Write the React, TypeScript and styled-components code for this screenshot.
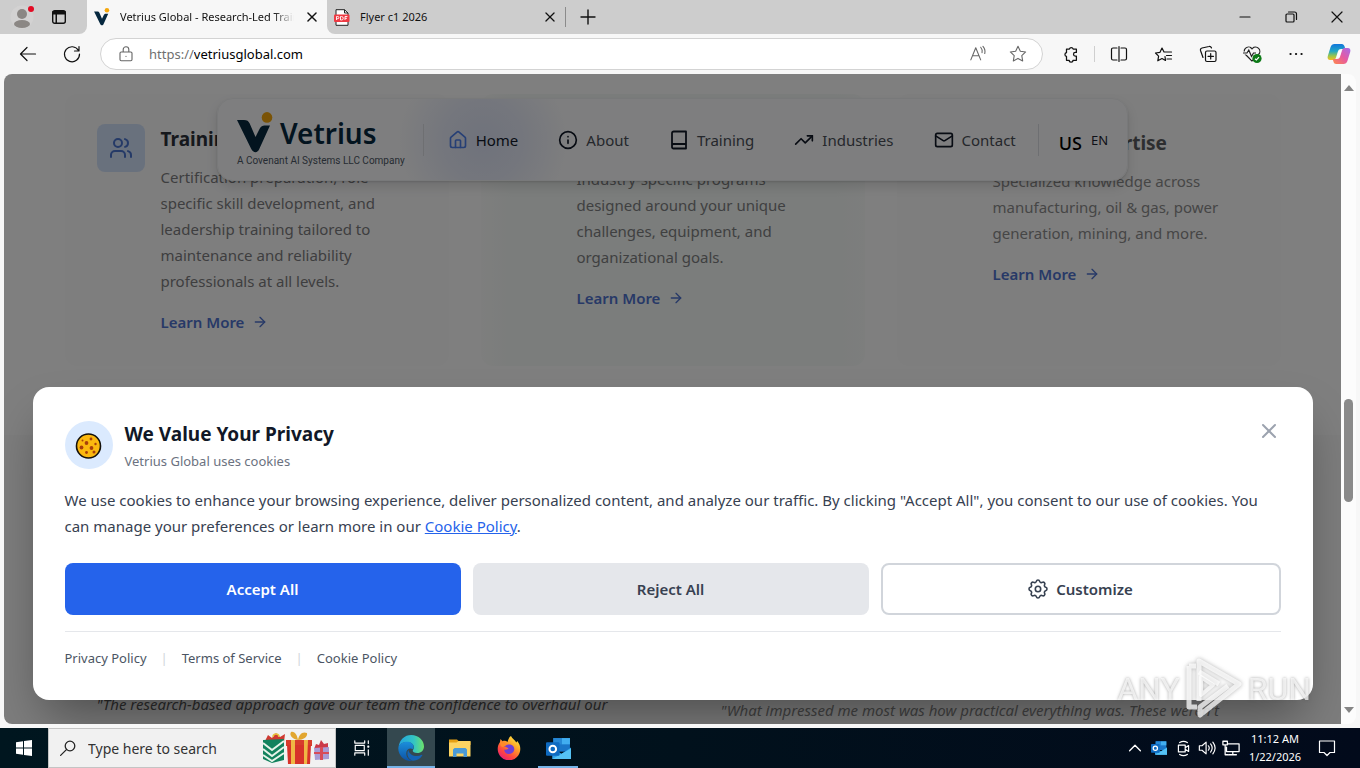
import React from "react";
import styled, { createGlobalStyle } from "styled-components";
import { ArrowRight, House, Info, Mail, TrendingUp, Users, X } from "lucide-react";

const sans = `"Noto Sans", "Open Sans", sans-serif`;

const GlobalStyle = createGlobalStyle`
  *, *::before, *::after { box-sizing: border-box; }
  body { margin: 0; font-family: ${sans}; font-size: 15px; color: #111; }
  button, input { font: inherit; color: inherit; }
  button { border: 0; padding: 0; background: none; cursor: pointer; }
  h2, h3, p { margin: 0; }
  svg { display: block; flex: none; }
`;

const Screen = styled.div`
  height: 100vh;
  display: flex;
  flex-direction: column;
  overflow: hidden;
  background: #f7f7f7;
`;

/* ---------- Browser chrome ---------- */

const TabStrip = styled.div`
  height: 34px;
  flex: none;
  display: flex;
  background: #f7f7f7;
`;

const StripStart = styled.div`
  width: 87px;
  display: flex;
  align-items: center;
  gap: 16px;
  padding-left: 9px;
  background: #cdcdcd;
  border-bottom-right-radius: 8px;
`;

const StripRest = styled.div`
  flex: 1;
  display: flex;
  align-items: center;
  background: #cdcdcd;
  border-bottom-left-radius: 8px;
`;

const Tab = styled.div<{ $active?: boolean }>`
  width: ${(p) => (p.$active ? 240 : 238)}px;
  height: 34px;
  display: flex;
  align-items: center;
  gap: 10px;
  padding: 0 7px;
  background: ${(p) => (p.$active ? "#f7f7f7" : "transparent")};
  border-radius: ${(p) => (p.$active ? "8px 8px 0 0" : 0)};
`;

const TabTitle = styled.span<{ $fade?: boolean }>`
  flex: 1;
  min-width: 0;
  overflow: hidden;
  white-space: nowrap;
  font-size: 11px;
  line-height: 16px;
  mask-image: ${(p) => (p.$fade ? "linear-gradient(to right, #000 88%, transparent)" : "none")};
`;

const IconButton = styled.button<{ $w?: number }>`
  width: ${(p) => p.$w ?? 16}px;
  height: 28px;
  flex: none;
  display: flex;
  align-items: center;
  justify-content: center;
`;

const StripLine = styled.span`
  width: 1px;
  height: 20px;
  background: #8b8b8b;
`;

const WindowButtons = styled.div`
  display: flex;
  margin-left: auto;
`;

const Toolbar = styled.div`
  height: 40px;
  flex: none;
  display: flex;
  align-items: center;
`;

const ToolStart = styled.div`
  width: 100px;
  display: flex;
  padding-left: 6px;
`;

const AddressBar = styled.label`
  flex: 1;
  height: 32px;
  display: flex;
  align-items: center;
  padding: 0 4px 0 17px;
  background: #fff;
  border: 1px solid #d3d3d3;
  border-radius: 16px;
  font-size: 13px;
  color: #666;
`;

const Scheme = styled.span`
  margin-left: 15px;
  color: #6f6f6f;
`;

const AddressInput = styled.input`
  flex: 1;
  min-width: 0;
  padding: 0;
  border: 0;
  outline: 0;
  background: none;
  color: #000;
`;

const ToolEnd = styled.div`
  display: flex;
  align-items: center;
  padding-left: 6px;
`;

const ToolLine = styled.span`
  width: 1px;
  height: 16px;
  margin: 0 1px;
  background: #cfcfcf;
`;

/* ---------- Web page ---------- */

const Frame = styled.div`
  flex: 1;
  min-height: 0;
  display: flex;
  padding: 0 4px 4px 4px;
`;

const Page = styled.main`
  position: relative;
  flex: 1;
  overflow: hidden;
  background: #fff;
  border-radius: 8px 0 0 8px;
`;

const Scrollbar = styled.div`
  width: 15px;
  display: flex;
  flex-direction: column;
  align-items: center;
  justify-content: space-between;
  background: #fcfcfc;
  border-radius: 0 8px 8px 0;
`;

const ScrollTrack = styled.div`
  flex: 1;
  display: flex;
  flex-direction: column;
  padding-top: 297px;
`;

const ScrollThumb = styled.span`
  width: 9px;
  height: 103px;
  border-radius: 5px;
  background: #8a8a8a;
`;

const Services = styled.section`
  padding: 20px 16px 69px;
`;

const Columns = styled.div<{ $count: number }>`
  max-width: 1216px;
  margin: 0 auto;
  display: grid;
  grid-template-columns: repeat(${(p) => p.$count}, minmax(0, 1fr));
  gap: 32px;
`;

const ServiceCard = styled.article<{ $tint: string; $rise: number }>`
  display: flex;
  align-items: flex-start;
  gap: 16px;
  padding: ${(p) => 30 + p.$rise}px 32px 32px;
  background: ${(p) => p.$tint};
  border-radius: 12px;
`;

const ServiceIcon = styled.span`
  width: 48px;
  height: 48px;
  flex: none;
  display: flex;
  align-items: center;
  justify-content: center;
  background: #d3e3fb;
  border-radius: 8px;
  color: #4a74cf;
`;

const ServiceTitle = styled.h3<{ $ink: string }>`
  margin-bottom: 10px;
  font-size: 19px;
  line-height: 30px;
  font-weight: 700;
  white-space: nowrap;
  color: ${(p) => p.$ink};
`;

const ServiceText = styled.p<{ $ink: string }>`
  line-height: 26px;
  white-space: pre-line;
  color: ${(p) => p.$ink};
`;

const LearnMore = styled.a`
  display: inline-flex;
  align-items: center;
  gap: 8px;
  margin-top: 16px;
  line-height: 24px;
  font-weight: 600;
  color: #4f73cf;
  text-decoration: none;
`;

const Testimonials = styled.section`
  padding: 256px 16px 64px;
  background: #fbfbfb;
`;

const Quote = styled.blockquote<{ $late?: boolean }>`
  margin: 0;
  padding: ${(p) => (p.$late ? 6 : 0)}px 32px 32px;
  line-height: 26px;
  font-style: italic;
  white-space: nowrap;
  color: ${(p) => (p.$late ? "#868686" : "#585858")};
`;

const NavHolder = styled.header`
  position: absolute;
  top: 24px;
  left: 0;
  right: 0;
  display: flex;
  justify-content: center;
`;

const NavBar = styled.nav`
  height: 83px;
  display: flex;
  align-items: center;
  padding: 0 19px;
  border: 1px solid #f1f2f4;
  border-radius: 16px;
  background: radial-gradient(circle at 265px 42px, #dfe5f8 0, #e9edfa 40px, #fdfdfe 86px);
  box-shadow: 0 6px 12px rgba(0, 0, 0, 0.12), 0 1px 2px rgba(0, 0, 0, 0.12);
`;

const Brand = styled.a`
  display: flex;
  flex-direction: column;
  color: #06283f;
  text-decoration: none;
`;

const BrandRow = styled.span`
  display: flex;
  align-items: center;
  gap: 6px;
  height: 42px;
  font-size: 28px;
  line-height: 42px;
  font-weight: 600;
`;

const BrandNote = styled.span`
  font-family: Roboto, sans-serif;
  font-size: 10px;
  line-height: 14px;
  color: #4d5866;
`;

const NavLine = styled.span<{ $before: number; $after: number }>`
  width: 1px;
  height: 32px;
  margin: 0 ${(p) => p.$after}px 0 ${(p) => p.$before}px;
  background: #dcdfe4;
`;

const NavLink = styled.a<{ $active?: boolean }>`
  display: flex;
  align-items: center;
  gap: 8px;
  padding: 12px 20px;
  color: ${(p) => (p.$active ? "#10182a" : "#4a4f58")};
  text-decoration: none;
  line-height: 24px;

  &:first-of-type { padding-left: 0; }
  svg { color: ${(p) => (p.$active ? "#4d7fea" : "#111827")}; }
`;

const NavLinks = styled.div`
  display: flex;
  margin-right: -20px;
`;

const Locale = styled.button`
  display: flex;
  align-items: center;
  gap: 9px;
  font-size: 13px;
  line-height: 24px;
  color: #1d2433;
`;

const LocaleRegion = styled.span`
  padding-top: 6px;
  font-size: 18px;
  line-height: 24px;
  font-weight: 500;
  color: #000;
`;

const Backdrop = styled.div`
  position: absolute;
  inset: 0;
  background: rgba(0, 0, 0, 0.5);
`;

/* ---------- Cookie dialog ---------- */

const Dialog = styled.section`
  position: absolute;
  left: 16px;
  right: 16px;
  bottom: 24px;
  max-width: 1280px;
  margin: 0 auto;
  padding: 32px;
  background: #fff;
  border-radius: 16px;
  box-shadow: 0 25px 50px -12px rgba(0, 0, 0, 0.4);
`;

const DialogHead = styled.div`
  display: flex;
  align-items: center;
  gap: 12px;
  height: 52px;
  margin-bottom: 16px;
`;

const DialogClose = styled.button`
  align-self: flex-start;
  margin-left: auto;
  color: #9ca3af;
`;

const CookieBadge = styled.span`
  width: 48px;
  height: 48px;
  display: flex;
  align-items: center;
  justify-content: center;
  border-radius: 50%;
  background: #dbeafe;
`;

const DialogTitle = styled.h2`
  font-size: 19px;
  line-height: 30px;
  font-weight: 700;
  color: #111827;
`;

const DialogSub = styled.p`
  margin-top: 2px;
  font-size: 13px;
  line-height: 20px;
  color: #6b7280;
`;

const DialogText = styled.p`
  line-height: 26px;
  color: #374151;
`;

const PolicyLink = styled.a`
  color: #2563eb;
  text-decoration: underline;
`;

const Actions = styled.div`
  display: flex;
  gap: 12px;
  margin: 24px 0 16px;
`;

const Action = styled.button<{ $kind: "primary" | "muted" | "outline" }>`
  flex: 1 1 0;
  display: flex;
  align-items: center;
  justify-content: center;
  gap: 8px;
  min-height: 52px;
  padding: 12px 24px;
  border: ${(p) => (p.$kind === "outline" ? "2px solid #d1d5db" : "0")};
  border-radius: 8px;
  background: ${(p) => ({ primary: "#2563eb", muted: "#e5e7eb", outline: "#fff" })[p.$kind]};
  color: ${(p) => (p.$kind === "primary" ? "#fff" : "#374151")};
  font-weight: 600;
`;

const LegalRow = styled.div`
  display: flex;
  gap: 14px;
  padding-top: 16px;
  border-top: 1px solid #e5e7eb;
  font-size: 13px;
  line-height: 20px;
  color: #d1d5db;
`;

const LegalLink = styled.a`
  color: #4b5563;
  text-decoration: none;
`;

const Watermark = styled.div`
  position: fixed;
  right: 49px;
  bottom: 47px;
  display: flex;
  align-items: center;
  gap: 6px;
  font-family: Roboto, sans-serif;
  font-size: 32px;
  line-height: 64px;
  color: rgba(255, 255, 255, 0.72);
  text-shadow: 0 0 3px rgba(90, 90, 90, 0.55);
`;

/* ---------- Taskbar ---------- */

const Taskbar = styled.footer`
  height: 40px;
  flex: none;
  display: flex;
  background: linear-gradient(to right, #00161f, #01111c 50%, #020a1b);
  color: #fff;
`;

const TaskButton = styled.button<{ $state?: "open" | "focused" }>`
  width: ${(p) => (p.$state === "open" ? 40 : 48)}px;
  margin: 0 ${(p) => (p.$state === "open" ? 4 : 0)}px;
  height: 40px;
  display: flex;
  align-items: center;
  justify-content: center;
  background: ${(p) => (p.$state === "focused" ? "#34484f" : "transparent")};
  box-shadow: ${(p) => (p.$state ? "inset 0 -2px 0 #76b3e8" : "none")};
`;

const SearchBox = styled.label`
  width: 288px;
  display: flex;
  align-items: center;
  padding: 0 3px 0 11px;
  background: #f1f1f1;
  border: 1px solid #c4c4c4;
  color: #222;
`;

const SearchInput = styled.input`
  flex: 1;
  min-width: 0;
  padding: 0;
  margin-left: 12px;
  border: 0;
  outline: 0;
  background: none;
  font-size: 14px;
  &::placeholder { color: #333; opacity: 1; }
`;

const TaskApps = styled.div`
  display: flex;
  padding-left: 2px;
  gap: 1px;
`;

const Tray = styled.div`
  display: flex;
  align-items: center;
  margin-left: auto;
  padding-right: 13px;
`;

const TrayButton = styled(IconButton)`
  width: 24px;
`;

const Clock = styled.time`
  width: 64px;
  font-size: 11px;
  line-height: 18px;
  text-align: center;
  white-space: nowrap;
`;

/* ---------- Drawings ---------- */

type LineProps = { d: string; size?: number; w?: number };
const Line = ({ d, size = 20, w = 1.2 }: LineProps) => (
  <svg width={size} height={size} viewBox="0 0 20 20" fill="none" stroke="currentColor" strokeWidth={w} strokeLinecap="round" strokeLinejoin="round">
    <path d={d} />
  </svg>
);

const crossPath = "M5.5 5.5l9 9M14.5 5.5l-9 9";
const starPath = "M10 1.500l2.600 5.400 5.900.8-4.300 4.100 1 5.900-5.200-2.800-5.200 2.800 1-5.900L1.500 7.700l5.900-.8z";

const VMark = ({ size }: { size: number }) => (
  <svg width={size} height={Math.round((size * 42) / 37)} viewBox="0 0 37 42">
    <path d="M0 8h7c3 0 4.500 1 5.700 3.500L18.500 25l4-8C24 14 25.500 13.500 27.500 13.500h5.500L22.500 36.500C20.500 41.500 16.500 41.500 14 36.500Z" fill="#06283f" />
    <circle cx="30" cy="5.400" r="5.300" fill="#f5a70c" />
  </svg>
);

const Profile = () => (
  <svg width="26" height="26" viewBox="0 0 26 26">
    <circle cx="13" cy="13" r="11.500" fill="#d3d2d2" />
    <circle cx="13" cy="10" r="5" fill="#8b8784" />
    <ellipse cx="13" cy="20" rx="8" ry="4" fill="#8b8784" />
    <circle cx="22" cy="5" r="3" fill="#e30b24" />
  </svg>
);

const TabsIcon = () => (
  <svg width="16" height="16" viewBox="0 0 16 16">
    <rect x="1.700" y="1.700" width="12.600" height="12.600" rx="2" fill="none" stroke="#111" strokeWidth="1.400" />
    <path d="M1.500 2h13v3.500H6V14H4.500V5.500h-3z" fill="#111" />
  </svg>
);

const PdfIcon = () => (
  <svg width="16" height="17" viewBox="0 0 16 17">
    <path d="M2 .7h8.500L14 4v12.300H2z" fill="#fff" stroke="#222" />
    <path d="M10.500.7V4H14" fill="none" stroke="#222" />
    <rect x="0" y="5.500" width="15.500" height="7.500" rx="1" fill="#ee3a43" />
    <path d="M2.500 11V7.500h1.300a1 1 0 0 1 0 2.200H2.500M6.500 7.500v3.500h1a1.700 1.700 0 0 0 0-3.500zM11 11V7.500h2.400M11 9.300h2" fill="none" stroke="#fff" strokeWidth=".9" />
  </svg>
);

const HealthIcon = () => (
  <svg width="20" height="20" viewBox="0 0 20 20" fill="none" stroke="#222" strokeWidth="1.200">
    <path d="M10 17L3.500 10.500a4.300 4.300 0 0 1 6-6.200l.5.5.5-.5a4.300 4.300 0 0 1 6 6.200z" />
    <path d="M1 9h4l1.800-3 2.700 6.500L11.500 9H14" stroke="#f7f7f7" strokeWidth="3" />
    <path d="M1 9h4l1.800-3 2.700 6.500L11.500 9H14" />
    <circle cx="15" cy="14.500" r="4.600" fill="#0d7a17" stroke="none" />
    <path d="M13 14.700l1.400 1.300 2.600-2.800" stroke="#fff" />
  </svg>
);

const CopilotIcon = () => (
  <svg width="24" height="24" viewBox="0 0 24 24">
    <defs>
      <linearGradient id="cpA" x1="0" y1="0" x2="0" y2="1">
        <stop offset="0" stopColor="#1176dc" /><stop offset=".45" stopColor="#22a8c4" /><stop offset=".75" stopColor="#9bc64a" /><stop offset="1" stopColor="#f6bd20" />
      </linearGradient>
      <linearGradient id="cpB" x1="1" y1="0" x2="0" y2="1">
        <stop offset="0" stopColor="#a66bea" /><stop offset=".5" stopColor="#e65aa0" /><stop offset="1" stopColor="#ff8a4a" />
      </linearGradient>
    </defs>
    <path d="M7.500 2h7.300c1.500 0 2.200 1 2.700 2.300L18.300 7H14c-2 0-2.700 1.200-3.200 2.800L9 15.500C8.400 17.400 7.300 18 5.500 18H3.200C.8 18 .2 16.200.8 14L3.600 5C4.300 3 5.500 2 7.500 2Z" fill="url(#cpA)" />
    <path d="M16.500 22H9.200c-1.500 0-2.200-1-2.700-2.300L5.700 17H10c2 0 2.700-1.200 3.200-2.800L15 8.500C15.600 6.600 16.700 6 18.500 6h2.300c2.400 0 3 1.800 2.400 4L20.400 19c-.7 2-1.900 3-3.900 3Z" fill="url(#cpB)" />
    <path d="M12 8.500h2.500L12.300 15.500H9.600Z" fill="#fff" opacity=".85" />
  </svg>
);

const BookIcon = () => (
  <svg width="20" height="20" viewBox="0 0 20 20" fill="none" stroke="currentColor" strokeWidth="1.800" strokeLinejoin="round">
    <path d="M3 17V3.200A1.700 1.700 0 0 1 4.700 1.500H17V18.500H4.500A1.500 1.500 0 0 1 3 17ZM3 15.500A1.500 1.500 0 0 1 4.500 14H17" />
  </svg>
);

const CogIcon = () => (
  <svg width="20" height="20" viewBox="2 2 20 20" fill="none" stroke="currentColor" strokeWidth="1.600" strokeLinecap="round" strokeLinejoin="round">
    <path d="M10.325 4.317c.426-1.756 2.924-1.756 3.350 0a1.724 1.724 0 002.573 1.066c1.543-.94 3.310.826 2.370 2.370a1.724 1.724 0 001.065 2.572c1.756.426 1.756 2.924 0 3.350a1.724 1.724 0 00-1.066 2.573c.94 1.543-.826 3.310-2.370 2.370a1.724 1.724 0 00-2.572 1.065c-.426 1.756-2.924 1.756-3.350 0a1.724 1.724 0 00-2.573-1.066c-1.543.94-3.310-.826-2.370-2.370a1.724 1.724 0 00-1.065-2.572c-1.756-.426-1.756-2.924 0-3.350a1.724 1.724 0 001.066-2.573c-.94-1.543.826-3.310 2.370-2.370.996.608 2.296.07 2.572-1.065z" />
    <circle cx="12" cy="12" r="2.700" />
  </svg>
);

const CookieIcon = () => (
  <svg width="28" height="28" viewBox="0 0 28 28">
    <circle cx="13.500" cy="15" r="12" fill="#fbb80f" stroke="#15110b" strokeWidth="1.600" />
    <g fill="#a8400b">
      <circle cx="16" cy="8" r="1.400" /><circle cx="11.500" cy="12" r="1.900" /><circle cx="7.500" cy="9.500" r="1" /><circle cx="20.500" cy="13" r="1.200" />
      <circle cx="6.500" cy="16.500" r="1.900" /><circle cx="16.500" cy="17" r="1.900" /><circle cx="11.500" cy="21.500" r="1.400" /><circle cx="19" cy="21" r="1.500" />
    </g>
  </svg>
);

const PlayMark = () => (
  <svg width="56" height="64" viewBox="0 0 56 64" fill="none" stroke="rgba(255,255,255,.75)" strokeWidth="5" strokeLinejoin="round" filter="drop-shadow(0 0 2px rgba(90,90,90,.6))">
    <path d="M13 44V4L53 27 14 58V50L42 29" />
    <path d="M13 15L33 27M3 9v41h8M3 9h7" />
    <path d="M15 20L27 28 15 38Z" strokeWidth="4" />
  </svg>
);

const Gifts = () => (
  <svg width="70" height="34" viewBox="0 0 70 34">
    <path d="M3 10L6 4l4 3 4-5 4 4 5-3-1 8Z" fill="#cf3931" />
    <path d="M11 6a3 3 0 0 1 6 0" fill="none" stroke="#e6c33d" strokeWidth="1.500" />
    <path d="M1 9l21-1v21l-12 3L1 28Z" fill="#12825d" />
    <path d="M1 12l9 7 12-9M1 18l9 7 12-9M1 24l9 6 12-8" fill="none" stroke="#e6f4e9" strokeWidth="2" />
    <path d="M36 9C30 8 27 4 29 1c4-1 6 3 7 8 1-5 4-9 9-7 1 4-4 7-9 7Z" fill="#e2a62f" />
    <path d="M24 9h26v6H24z" fill="#d73c2c" /><path d="M25 14h24l-1 19H26z" fill="#d7322a" />
    <path d="M29 9h4v24h-4zM42 9h4l-1 24h-3z" fill="#f0b644" />
    <path d="M52 18l2-5 3 1 2-5 3 4 4-1v6Z" fill="#cc3848" />
    <path d="M52 17l15-1v12l-14 1Z" fill="#a99bd4" /><path d="M58 16h3v13h-3zM52 21h15v2H52z" fill="#d84b58" />
  </svg>
);

const EdgeIcon = () => (
  <svg width="26" height="26" viewBox="0 0 24 24">
    <defs>
      <linearGradient id="edA" x1="0" y1="0" x2="1" y2="0"><stop offset="0" stopColor="#23a4df" /><stop offset=".6" stopColor="#33c4c4" /><stop offset="1" stopColor="#6de36a" /></linearGradient>
      <linearGradient id="edB" x1="0" y1="0" x2="0" y2="1"><stop offset="0" stopColor="#1b8fdc" /><stop offset="1" stopColor="#0d52a4" /></linearGradient>
    </defs>
    <path d="M.5 11C1.500 4.500 6 0 12.200 0 19 0 24 5 24 10.500c0 3.500-2.600 6-6.200 6-3 0-4.200-1.200-4.200-2 0-.7 1-1.200 1-3.200C14.600 8.500 12 6.500 8.500 6.500 4.500 6.500 1.500 8.500.5 11Z" fill="url(#edA)" />
    <path d="M.3 12C.8 8.500 4.500 6.300 8.400 6.300c3.200 0 6 1.900 6 4.700 0 1-.3 1.500-.8 2.100-2.500-1.600-6 .2-6 3.900 0 3.400 2.600 6.300 6.200 6.800C6 25 0 19 .3 12Z" fill="url(#edB)" />
    <path d="M9.500 13.800c-2 3.500-.3 8.700 4.300 10 4 0 7-2 8.700-5 .2-.5-.2-.7-.6-.5-5 2.500-11.400.5-12.400-4.500Z" fill="#1463b5" />
  </svg>
);

const FolderIcon = () => (
  <svg width="22" height="20" viewBox="0 0 22 20">
    <path d="M0 1.500h8l2 2h11.500V7H0z" fill="#e5a014" />
    <path d="M0 4.500h7.500l2-1.500h12v15.500H0z" fill="#fcd462" />
    <path d="M4 19v-7.500L5.500 10h11l1.500 1.500V19h-3.500v-3.500H7.500V19z" fill="#4a9ad6" />
  </svg>
);

const FirefoxIcon = () => (
  <svg width="24" height="24" viewBox="0 0 24 24">
    <defs>
      <linearGradient id="ffA" x1=".85" y1="0" x2=".2" y2="1"><stop offset="0" stopColor="#fff04a" /><stop offset=".35" stopColor="#ffa727" /><stop offset=".7" stopColor="#ff4a3d" /><stop offset="1" stopColor="#e8187c" /></linearGradient>
    </defs>
    <path d="M14 0c1 3 4 3.500 5.300 6.500l1-1.500c2 2.500 3 5 3 8A11.300 11.300 0 0 1 .7 13c0-3 .8-5 2.200-6.800L3.500 3l2 2.300C7.500 4.500 9 4.800 10.500 6c1-3 1.500-5 3.500-6Z" fill="url(#ffA)" />
    <path d="M6.500 10c2 0 3-1.300 5-1.500 4-.2 6.300 2.500 5.700 5.500-.6 2.800-3 4-5.500 4C9 18 7 16 7.300 13.500c2 .8 3.700-.3 4.200-1.500-2 0-2.800-1.800-5-2Z" fill="#6f3fd6" />
    <path d="M3 6c1.500 0 3-.2 4.500.8L9.500 9 6 11c-2 0-3-2-3-5Z" fill="#ff8a2a" />
  </svg>
);

const OutlookIcon = ({ size }: { size: number }) => (
  <svg width={size} height={size} viewBox="0 0 24 24">
    <path d="M7 2h16v13H7z" fill="#1a76c8" /><path d="M15 2h8v6h-8z" fill="#41aef0" /><path d="M7 2h8v6H7z" fill="#2688d6" />
    <path d="M6 12l9 5 9-6v11H6z" fill="#2fa0e8" /><path d="M6 22l18-10v10z" fill="#55c2f4" />
    <rect x="0" y="6" width="13" height="13" rx="1" fill="#0e6ac0" />
    <circle cx="6.500" cy="12.500" r="3.200" fill="none" stroke="#fff" strokeWidth="1.900" />
  </svg>
);

const navItems = [
  { label: "Home", icon: <House size={20} />, active: true },
  { label: "About", icon: <Info size={20} /> },
  { label: "Training", icon: <BookIcon /> },
  { label: "Industries", icon: <TrendingUp size={20} /> },
  { label: "Contact", icon: <Mail size={20} /> },
];

const services = [
  {
    title: "Training",
    text: "Certification preparation, role-\nspecific skill development, and\nleadership training tailored to\nmaintenance and reliability\nprofessionals at all levels.",
    icon: <Users size={24} />, tint: "#fcfcfd", rise: 0, titleInk: "#2c3039", ink: "#7c7d80",
  },
  {
    title: "",
    text: "Industry-specific programs\ndesigned around your unique\nchallenges, equipment, and\norganizational goals.",
    tint: "linear-gradient(to right, #fcfdfc, #f6faf8 8%, #f6faf8 92%, #fafcfb)", rise: 2, titleInk: "#454545", ink: "#7f8182",
  },
  {
    title: "Industry Expertise",
    text: "Specialized knowledge across\nmanufacturing, oil & gas, power\ngeneration, mining, and more.",
    tint: "#fcfcfc", rise: 4, titleInk: "#5a5c60", ink: "#8c8c8c",
  },
];

export default function App() {
  return (
    <Screen>
      <GlobalStyle />
      <TabStrip>
        <StripStart>
          <IconButton $w={26} aria-label="Profile"><Profile /></IconButton>
          <IconButton $w={16} aria-label="Tab actions"><TabsIcon /></IconButton>
        </StripStart>
        <Tab $active>
          <VMark size={16} />
          <TabTitle $fade>Vetrius Global - Research-Led Training</TabTitle>
          <IconButton aria-label="Close tab"><Line d={crossPath} size={18} w={1.6} /></IconButton>
        </Tab>
        <StripRest>
          <Tab>
            <PdfIcon />
            <TabTitle>Flyer c1 2026</TabTitle>
            <IconButton aria-label="Close tab"><Line d={crossPath} size={18} w={1.4} /></IconButton>
          </Tab>
          <StripLine />
          <IconButton $w={44} aria-label="New tab"><Line d="M10 3v14M3 10h14" w={1.4} /></IconButton>
          <WindowButtons>
            <IconButton $w={46} aria-label="Minimize"><Line d="M5 10h10" /></IconButton>
            <IconButton $w={46} aria-label="Restore"><Line d="M6.500 7h5.500a1 1 0 0 1 1 1v6a1 1 0 0 1-1 1h-6a1 1 0 0 1-1-1V8a1 1 0 0 1 1-1ZM7.500 5h6a2 2 0 0 1 2 2V12.500" /></IconButton>
            <IconButton $w={46} aria-label="Close"><Line d="M5 5l10 10M15 5L5 15" /></IconButton>
          </WindowButtons>
        </StripRest>
      </TabStrip>

      <Toolbar>
        <ToolStart>
          <IconButton $w={44} aria-label="Back"><Line d="M17.500 10H2.500M9 3.500L2.500 10 9 16.500" /></IconButton>
          <IconButton $w={44} aria-label="Reload"><Line d="M16.500 6.500A7.500 7.500 0 1 0 17.500 10M17 2.500v4.500h-4.500" /></IconButton>
        </ToolStart>
        <AddressBar>
          <Line size={16} d="M4 7.500h12a1.500 1.500 0 0 1 1.500 1.500v8a1.500 1.500 0 0 1-1.500 1.500H4A1.500 1.500 0 0 1 2.500 17V9A1.500 1.500 0 0 1 4 7.500ZM6.500 7.500V4.500a3.500 3.500 0 0 1 7 0v3M10 13v.2" w={1.4} />
          <Scheme>https://</Scheme>
          <AddressInput aria-label="Address" defaultValue="vetriusglobal.com" />
          <IconButton $w={40} aria-label="Read aloud"><Line size={18} d="M2 16.500L7.500 3 13 16.500M4 12h7M13 2.500a7 7 0 0 1 1.500 6M15.500 1.500a9 9 0 0 1 2 8" /></IconButton>
          <IconButton $w={40} aria-label="Favorite"><Line size={18} d={starPath} /></IconButton>
        </AddressBar>
        <ToolEnd>
          <IconButton $w={44} aria-label="Extensions"><Line size={18} w={1.4} d="M5 4.500h3.200a2.200 2.200 0 0 1 4.200 0H16V8.300h-1.200a2 2 0 0 0 0 4H16V17h-3.800a2 2 0 0 1-4.200 0H5V12.700a2.200 2.200 0 0 1 0-4.300Z" /></IconButton>
          <ToolLine />
          <IconButton $w={46} aria-label="Split screen"><Line d="M8 4H4a1.500 1.500 0 0 0-1.500 1.500v9A1.500 1.500 0 0 0 4 16h4M12 4h4a1.500 1.500 0 0 1 1.500 1.500v9A1.500 1.500 0 0 1 16 16h-4M10 2.500v15" /></IconButton>
          <IconButton $w={44} aria-label="Favorites"><Line d="M11 12.500l.5 4L8 14.500 3.800 16.800l.8-4.700L1.500 9l4.500-.7L8 4l2 4h7.500M12.500 11.500h5M13 15h4.500" /></IconButton>
          <IconButton $w={44} aria-label="Collections"><Line d="M9 7h7.500A1.500 1.500 0 0 1 18 8.500V16a1.500 1.500 0 0 1-1.500 1.500H9A1.500 1.500 0 0 1 7.500 16V8.500A1.500 1.500 0 0 1 9 7ZM12.700 9.500V15M10 12.300h5.500M5 13.500l-2.500-7A2 2 0 0 1 4 4l7-1.500a2 2 0 0 1 2.500 1.500" /></IconButton>
          <IconButton $w={44} aria-label="Browser essentials"><HealthIcon /></IconButton>
          <IconButton $w={44} aria-label="Settings and more"><Line d="M4.500 10h.1M10 10h.1M15.500 10h.1" w={2.2} /></IconButton>
          <IconButton $w={42} aria-label="Copilot"><CopilotIcon /></IconButton>
        </ToolEnd>
      </Toolbar>

      <Frame>
        <Page>
          <Services>
            <Columns $count={3}>
              {services.map((s) => (
                <ServiceCard key={s.text} $tint={s.tint} $rise={s.rise}>
                  <ServiceIcon>{s.icon}</ServiceIcon>
                  <div>
                    <ServiceTitle $ink={s.titleInk}>{s.title || "\u00a0"}</ServiceTitle>
                    <ServiceText $ink={s.ink}>{s.text}</ServiceText>
                    <LearnMore href="#services">Learn More <ArrowRight size={16} /></LearnMore>
                  </div>
                </ServiceCard>
              ))}
            </Columns>
          </Services>
          <Testimonials>
            <Columns $count={2}>
              <Quote>"The research-based approach gave our team the confidence to overhaul our</Quote>
              <Quote $late>"What impressed me most was how practical everything was. These weren't</Quote>
            </Columns>
          </Testimonials>

          <NavHolder>
            <NavBar>
              <Brand href="#top">
                <BrandRow><VMark size={37} />Vetrius</BrandRow>
                <BrandNote>A Covenant AI Systems LLC Company</BrandNote>
              </Brand>
              <NavLine $before={18} $after={24} />
              <NavLinks>
                {navItems.map((n) => (
                  <NavLink key={n.label} href={`#${n.label.toLowerCase()}`} $active={n.active}>{n.icon}{n.label}</NavLink>
                ))}
              </NavLinks>
              <NavLine $before={22} $after={20} />
              <Locale><LocaleRegion>US</LocaleRegion>EN</Locale>
            </NavBar>
          </NavHolder>

          <Backdrop />

          <Dialog role="dialog" aria-labelledby="cookie-title">
            <DialogHead>
              <CookieBadge><CookieIcon /></CookieBadge>
              <div>
                <DialogTitle id="cookie-title">We Value Your Privacy</DialogTitle>
                <DialogSub>Vetrius Global uses cookies</DialogSub>
              </div>
              <DialogClose aria-label="Close"><X size={24} /></DialogClose>
            </DialogHead>
            <DialogText>
              We use cookies to enhance your browsing experience, deliver personalized content, and analyze our traffic. By clicking "Accept All", you consent to our use of cookies. You
              <br />
              can manage your preferences or learn more in our{" "}
              <PolicyLink href="#cookies">Cookie Policy</PolicyLink>.
            </DialogText>
            <Actions>
              <Action $kind="primary">Accept All</Action>
              <Action $kind="muted">Reject All</Action>
              <Action $kind="outline"><CogIcon />Customize</Action>
            </Actions>
            <LegalRow>
              <LegalLink href="#privacy">Privacy Policy</LegalLink>|
              <LegalLink href="#terms">Terms of Service</LegalLink>|
              <LegalLink href="#cookies">Cookie Policy</LegalLink>
            </LegalRow>
          </Dialog>
        </Page>
        <Scrollbar>
          <IconButton aria-label="Scroll up"><svg width="10" height="6"><path d="M0 6L5 0l5 6z" fill="#858585" /></svg></IconButton>
          <ScrollTrack><ScrollThumb /></ScrollTrack>
          <IconButton aria-label="Scroll down"><svg width="10" height="6"><path d="M0 0l5 6 5-6z" fill="#858585" /></svg></IconButton>
        </Scrollbar>
      </Frame>

      <Taskbar>
        <TaskButton aria-label="Start">
          <svg width="16" height="16" viewBox="0 0 16 16"><path d="M0 2.200L7 1.200V7.500H0zM8 1L16 0v7.500H8zM0 8.500h7v6.300L0 13.800zM8 8.500h8V16l-8-1z" fill="#fff" /></svg>
        </TaskButton>
        <SearchBox>
          <Line size={16} w={1.6} d="M12.500 1.500a6 6 0 1 1 0 12 6 6 0 0 1 0-12ZM8 12L.8 19.200" />
          <SearchInput aria-label="Search" placeholder="Type here to search" />
          <Gifts />
        </SearchBox>
        <TaskApps>
          <TaskButton aria-label="Task view"><Line size={18} w={1.3} d="M2 2v2.500h11V2M2 18v-2.500h11V18M2.500 7h10v6h-10zM17 2v3M17 12v6M16.500 8h1v1h-1z" /></TaskButton>
          <TaskButton $state="focused" aria-label="Edge"><EdgeIcon /></TaskButton>
          <TaskButton aria-label="File Explorer"><FolderIcon /></TaskButton>
          <TaskButton aria-label="Firefox"><FirefoxIcon /></TaskButton>
          <TaskButton $state="open" aria-label="Outlook"><OutlookIcon size={25} /></TaskButton>
        </TaskApps>
        <Tray>
          <TrayButton aria-label="Hidden icons"><Line size={18} w={1.5} d="M4 13l6-6 6 6" /></TrayButton>
          <TrayButton aria-label="Outlook"><OutlookIcon size={16} /></TrayButton>
          <TrayButton aria-label="Meet now"><Line size={17} w={1.4} d="M4 6h8v8H4zM12 9l4-2.500v7L12 11M5.500 3Q10 0 14.500 3M5.500 17Q10 20 14.500 17" /></TrayButton>
          <TrayButton aria-label="Volume"><Line size={18} w={1.3} d="M1.500 7.500h3L9 3.500v13l-4.500-4h-3zM11.500 7.500q2 2.500 0 5M14 5.500q3.500 4.500 0 9M16.500 3.500q5 6.500 0 13" /></TrayButton>
          <TrayButton aria-label="Network"><Line size={18} w={1.4} d="M7 5.500h12v8.500H5V9M12 14v3.500M8 17.500h8M1 2.500h5v4H1zM3.500 6.500v11H7" /></TrayButton>
          <Clock>11:12 AM<br />1/22/2026</Clock>
          <IconButton $w={40} aria-label="Notifications"><Line size={20} d="M2.500 3h15v11.500H13L10 17.500 7 14.500H2.500Z" /></IconButton>
        </Tray>
      </Taskbar>
      <Watermark><span>ANY</span><PlayMark /><span>RUN</span></Watermark>
    </Screen>
  );
}
